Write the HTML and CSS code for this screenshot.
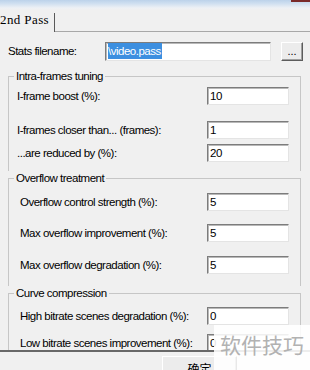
FILE: index.html
```html
<!DOCTYPE html>
<html>
<head>
<meta charset="utf-8">
<link rel="stylesheet" href="styles.css">
</head>
<body>
<div class="window">
  <div class="titlebar"><span class="close"></span></div>
  <div class="tabs">
    <div class="tab">2nd Pass</div>
    <div class="tab-rest"></div>
  </div>
  <div class="panel">
    <div class="stats-row">
      <span class="stats-label">Stats filename:</span>
      <div class="field field-wide"><span class="sel">\video.pass</span></div>
      <button class="browse">...</button>
    </div>

    <fieldset class="group group-intra">
      <legend>Intra-frames tuning</legend>
      <div class="row mt4"><span class="lbl">I-frame boost (%):</span><div class="field">10</div></div>
      <div class="row mt16"><span class="lbl">I-frames closer than... (frames):</span><div class="field">1</div></div>
      <div class="row mt5 mb9"><span class="lbl">...are reduced by (%):</span><div class="field">20</div></div>
    </fieldset>

    <fieldset class="group group-wide">
      <legend>Overflow treatment</legend>
      <div class="row mt8"><span class="lbl">Overflow control strength (%):</span><div class="field">5</div></div>
      <div class="row mt13"><span class="lbl">Max overflow improvement (%):</span><div class="field">5</div></div>
      <div class="row mt14 mb12"><span class="lbl">Max overflow degradation (%):</span><div class="field">5</div></div>
    </fieldset>

    <fieldset class="group group-wide">
      <legend>Curve compression</legend>
      <div class="row mt7"><span class="lbl">High bitrate scenes degradation (%):</span><div class="field">0</div></div>
      <div class="row mt9"><span class="lbl">Low bitrate scenes improvement (%):</span><div class="field">0</div></div>
    </fieldset>
  </div>
  <div class="footer"><button class="ok">确定</button></div>
  <div class="watermark">软件技巧</div>
</div>
</body>
</html>
```
FILE: styles.css
```css
html, body {
  margin: 0;
  padding: 0;
  background: #f0f0f0;
}
.window {
  position: relative;
  width: 310px;
  height: 370px;
  overflow: hidden;
  background: #f0f0f0;
  font-family: "Liberation Sans", Arial, sans-serif;
  font-size: 11.5px;
  letter-spacing: -0.5px;
  color: #000;
}
.titlebar {
  height: 10px;
  display: flex;
  justify-content: flex-end;
  background: linear-gradient(#bcd2ea 0, #cfdff0 35%, #eef1f5 80%, #f0f0f0 100%);
}
.close {
  width: 19px;
  height: 2px;
  background: #7a2a2a;
}
.tabs {
  height: 22px;
  display: flex;
}
.tab {
  width: 54px;
  height: 19px;
  margin-top: 3px;
  border-right: 1px solid #5a5a5a;
  font-family: "Liberation Serif", "Times New Roman", serif;
  font-size: 13px;
  letter-spacing: 0.4px;
  line-height: 14px;
  white-space: nowrap;
  overflow: hidden;
}
.tab-rest {
  flex: 1;
  border-bottom: 1px solid #a8a8a8;
}
.panel {
  height: 318px;
  padding-left: 8px;
  border-bottom: 2px solid #686868;
  overflow: hidden;
}
.stats-row {
  display: flex;
  align-items: flex-start;
  margin-top: 10px;
  height: 19px;
}
.stats-label {
  width: 97px;
  line-height: 19px;
}
.field {
  box-sizing: border-box;
  width: 82px;
  height: 18px;
  background: #fff;
  border: 1px solid;
  border-color: #7c7c7c #e4e4e4 #e4e4e4 #7c7c7c;
  box-shadow: inset 1px 1px 0 #b8b8b8;
  padding-left: 2px;
  line-height: 16px;
}
.field-wide {
  width: 166px;
  height: 19px;
  line-height: 16px;
  padding-top: 0;
}
.sel {
  display: inline-block;
  background: #3c8fe0;
  color: #fff;
  line-height: 16px;
  padding-right: 1px;
}
.browse {
  box-sizing: border-box;
  margin: 0 0 0 10px;
  width: 22px;
  height: 19px;
  padding: 0;
  background: #ececec;
  border: 1px solid;
  border-color: #ffffff #5c5c5c #5c5c5c #ffffff;
  box-shadow: inset -1px -1px 0 #a0a0a0;
  font-family: "Liberation Sans", Arial, sans-serif;
  font-size: 11px;
  line-height: 15px;
  color: #000;
}
.group {
  margin: 8px 9px 0 0;
  padding: 0;
  min-width: 0;
  border: 1px solid #c6c6c6;
  border-bottom: none;
}
.group + .group {
  margin-top: 0;
}
.group legend {
  margin-left: 5px;
  padding: 0 2px;
  line-height: 14px;
}
.row {
  display: grid;
  grid-template-columns: 1fr 82px;
  height: 18px;
  padding-right: 11px;
  align-items: center;
}
.lbl {
  line-height: 18px;
  white-space: nowrap;
  padding-left: 8px;
}
.group-wide .lbl {
  padding-left: 11px;
}
.mt4 { margin-top: 4px; }
.mt5 { margin-top: 5px; }
.mt7 { margin-top: 7px; }
.mt8 { margin-top: 8px; }
.mt9 { margin-top: 9px; }
.mt13 { margin-top: 13px; }
.mt14 { margin-top: 14px; }
.mt16 { margin-top: 16px; }
.mb9 { margin-bottom: 9px; }
.mb12 { margin-bottom: 12px; }
.footer {
  height: 18px;
  padding-left: 162px;
}
.ok {
  box-sizing: border-box;
  margin: 4px 0 0 0;
  width: 75px;
  height: 23px;
  padding: 3px 0 0 0;
  background: #ececec;
  border: 1px solid;
  border-color: #ffffff #404040 #404040 #ffffff;
  box-shadow: inset -1px -1px 0 #a0a0a0;
  font-family: "Noto Sans CJK SC", sans-serif;
  font-size: 12px;
  line-height: 14px;
  vertical-align: top;
  color: #000;
}
.watermark {
  position: absolute;
  left: 214px;
  top: 325px;
  right: 0;
  bottom: 0;
  background: rgba(255, 255, 255, 0.88);
  font-family: "Noto Sans CJK SC", sans-serif;
  font-size: 21px;
  letter-spacing: 0;
  line-height: 24px;
  padding: 7px 0 0 6px;
  color: #b2b2b2;
}
```
